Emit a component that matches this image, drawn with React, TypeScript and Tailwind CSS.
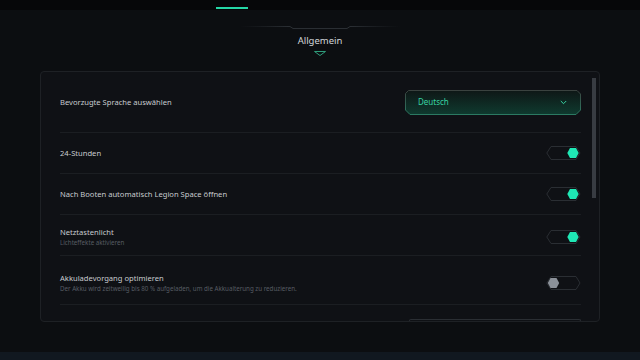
import React from 'react';

const Toggle: React.FC<{ on: boolean }> = ({ on }) => (
  <svg width="35" height="14" viewBox="0 0 35 14" className="shrink-0">
    <polygon points="5,0.5 30,0.5 34,7 30,13.5 5,13.5 0.8,7" fill="none" stroke="#2a2e33" strokeWidth="1" />
    {on ? (
      <polygon points="24,2 30,2 32.7,7 30,12 24,12 21.3,7" fill="#1fe8b5" />
    ) : (
      <polygon points="4.5,2 10.5,2 13.2,7 10.5,12 4.5,12 1.8,7" fill="#8b9199" />
    )}
  </svg>
);

const Row: React.FC<{ title: string; sub?: string; right: React.ReactNode; className: string }> = ({
  title,
  sub,
  right,
  className,
}) => (
  <div className={`flex items-center justify-between border-b border-[#1b1e22] ${className}`}>
    <div className="flex flex-col">
      <span className="text-[7.6px] leading-[11px] text-[#c8cbcf]">{title}</span>
      {sub && <span className="text-[6.2px] leading-[9px] text-[#575c63]">{sub}</span>}
    </div>
    {right}
  </div>
);

const Dropdown: React.FC = () => (
  <div className="relative flex h-[25px] w-[176px] items-center justify-between px-[13px]">
    <svg width="176" height="25" viewBox="0 0 176 25" className="absolute inset-0">
      <defs>
        <linearGradient id="dd" x1="0" y1="0" x2="0" y2="1">
          <stop offset="0" stopColor="#0e1716" />
          <stop offset="1" stopColor="#0f3a2f" />
        </linearGradient>
        <linearGradient id="ddb" x1="0" y1="0" x2="0" y2="1">
          <stop offset="0" stopColor="#3a423f" />
          <stop offset="1" stopColor="#2b7a62" />
        </linearGradient>
      </defs>
      <polygon
        points="3.5,0.5 172,0.5 175.5,4 175.5,20 171,24.5 5,24.5 0.5,20 0.5,3.5"
        fill="url(#dd)"
        stroke="url(#ddb)"
        strokeWidth="1"
      />
    </svg>
    <span className="relative text-[8px] text-[#38d4a3]">Deutsch</span>
    <svg width="7" height="5" viewBox="0 0 7 5" className="relative mr-[1px]">
      <polyline points="0.8,1 3.5,3.7 6.2,1" fill="none" stroke="#38d4a3" strokeWidth="1" />
    </svg>
  </div>
);

export default function App() {
  return (
    <div className="flex h-[360px] w-[640px] flex-col overflow-hidden bg-[#0c0e11] font-['Noto_Sans',sans-serif]">
      <div className="flex h-[10px] items-end bg-[#060709] pl-[216px] pb-[1px]">
        <div className="h-[2px] w-[32px] bg-[#25d7a6]" />
      </div>

      <div className="relative flex h-[61px] justify-center">
        <svg width="180" height="61" viewBox="0 0 180 61" className="absolute left-[230px] top-0">
          <defs>
            <linearGradient id="ln" x1="0" y1="0" x2="1" y2="0">
              <stop offset="0" stopColor="#22262b" stopOpacity="0" />
              <stop offset="0.3" stopColor="#2a2e33" />
              <stop offset="0.7" stopColor="#2a2e33" />
              <stop offset="1" stopColor="#22262b" stopOpacity="0" />
            </linearGradient>
          </defs>
          <polyline points="10,16.5 60,16.5 63,18.5 117,18.5 120,16.5 170,16.5" fill="none" stroke="url(#ln)" strokeWidth="1" />
          <line x1="5" y1="43.5" x2="175" y2="43.5" stroke="url(#ln)" strokeWidth="1" />
          <polygon points="84.5,41.5 95.5,41.5 90,45.5" fill="#0c0e11" stroke="#2f9c7b" strokeWidth="1" />
        </svg>
        <span className="relative pt-[24px] text-[9.5px] text-[#d3d6d9]">Allgemein</span>
      </div>

      <div className="mx-[40px] flex h-[251px] w-[560px] overflow-hidden rounded-[4px] border border-[#1e2125] bg-[#0f1115]">
        <div className="flex w-[540px] flex-col pl-[19px]">
          <Row title="Bevorzugte Sprache auswählen" right={<Dropdown />} className="h-[61px]" />
          <Row title="24-Stunden" right={<Toggle on />} className="h-[41px]" />
          <Row title="Nach Booten automatisch Legion Space öffnen" right={<Toggle on />} className="h-[41px]" />
          <Row title="Netztastenlicht" sub="Lichteffekte aktivieren" right={<Toggle on />} className="h-[41px] pt-[4px]" />
          <Row
            title="Akkuladevorgang optimieren"
            sub="Der Akku wird zeitweilig bis 80 % aufgeladen, um die Akkualterung zu reduzieren."
            right={<Toggle on={false} />}
            className="h-[49px] pt-[5px]"
          />
          <div className="flex flex-1 items-end justify-end">
            <div className="h-[2px] w-[172px] rounded-t-[2px] border-x border-t border-[#2a2e33]" />
          </div>
        </div>
        <div className="ml-[11px] mt-[6px] h-[120px] w-[4px] bg-[#383c42]" />
      </div>

      <div className="flex-1" />
      <div className="h-[8px] bg-[#111820]" />
    </div>
  );
}
